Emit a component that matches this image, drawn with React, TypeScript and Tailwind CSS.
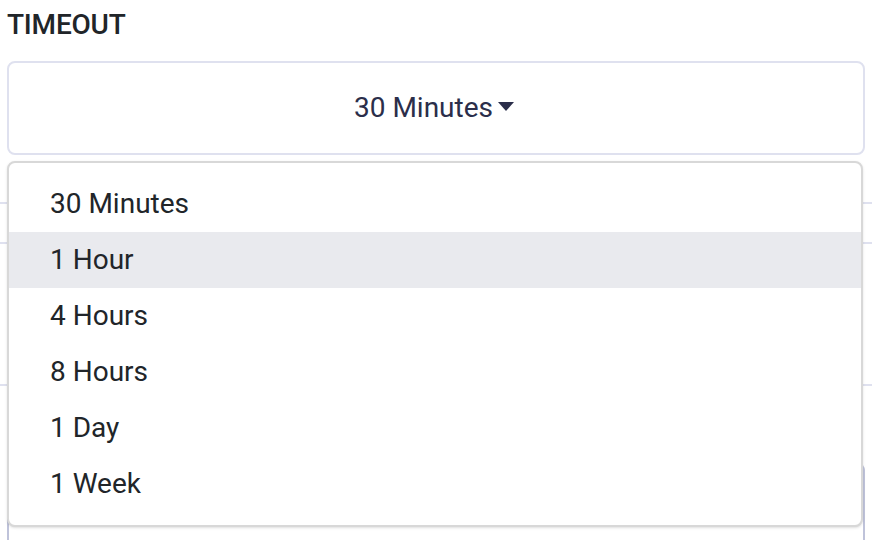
const options = ['30 Minutes', '1 Hour', '4 Hours', '8 Hours', '1 Day', '1 Week'];

export default function App() {
  const active = 1;
  return (
    <div className="relative h-[540px] w-[872px] overflow-hidden bg-white font-['Roboto',sans-serif]">
      <div className="px-[7px]">
        <div className="mt-[9px] h-[32px] text-[28px] font-medium leading-[32px] tracking-[-0.2px] text-[#212529]">TIMEOUT</div>

        <button className="mt-[20px] flex h-[94px] w-full items-center justify-center gap-[5px] rounded-[8px] border-2 border-[#dfe1ef] bg-white pr-[4px] text-[#2b2e4a]">
          <span className="text-[28px] leading-none">30 Minutes</span>
          <svg width="16" height="9" viewBox="0 0 16 9" className="mt-[-4px]">
            <path d="M0 0h16L8 9z" fill="#2b2e4a" />
          </svg>
        </button>
      </div>

      {/* form content behind the open menu */}
      <div className="h-[49px] border-b-2 border-[#dfe1ef]" />
      <div className="h-[40px] border-b-2 border-[#dfe1ef]" />
      <div className="h-[142px] border-b-2 border-[#dfe1ef]" />
      <div className="h-[78px] px-[7px] pt-[30px]">
        <div className="h-[20px] w-[2px] bg-[#6f7078]" />
      </div>
      <div className="mx-[7px] h-[80px] rounded-t-[6px] border-x-2 border-t-2 border-[#bfc3da]" />

      <ul className="absolute left-[7px] top-[161px] h-[366px] w-[856px] rounded-[8px] border-2 border-[#d8d8d8] bg-white py-[13px] shadow-sm">
        {options.map((o, i) => (
          <li
            key={o}
            className={`h-[56px] pl-[41px] text-[28px] leading-[56px] text-[#212529] ${i === active ? 'bg-[#e9eaee]' : ''}`}
          >
            {o}
          </li>
        ))}
      </ul>
    </div>
  );
}
